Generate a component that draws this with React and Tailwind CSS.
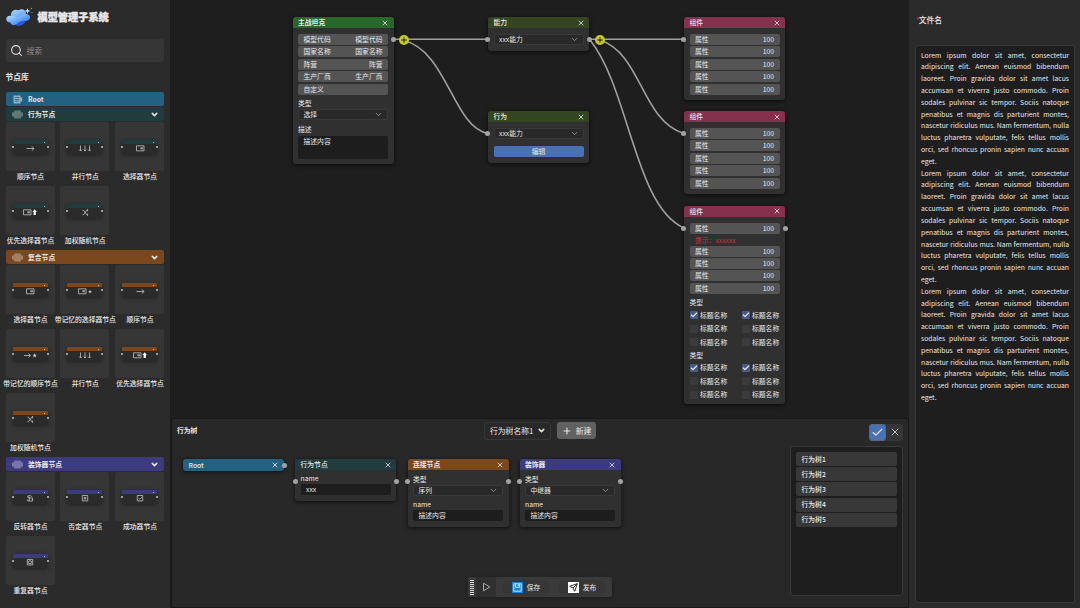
import { Check, ChevronDown, Plus, Search, Send, X } from "lucide-react";

const behaviors = [
  { name: "顺序节点", icon: "arrow" },
  { name: "并行节点", icon: "parallel" },
  { name: "选择器节点", icon: "select" },
  { name: "优先选择器节点", icon: "priority" },
  { name: "加权随机节点", icon: "random" }
];

const composites = [
  { name: "选择器节点", icon: "select" },
  { name: "带记忆的选择器节点", icon: "selectStar" },
  { name: "顺序节点", icon: "arrow" },
  { name: "带记忆的顺序节点", icon: "arrowStar" },
  { name: "并行节点", icon: "parallel" },
  { name: "优先选择器节点", icon: "priority" },
  { name: "加权随机节点", icon: "random" }
];

const decorators = [
  { name: "反转器节点", icon: "invert" },
  { name: "否定器节点", icon: "negate" },
  { name: "成功器节点", icon: "success" },
  { name: "重复器节点", icon: "repeat" }
];

const attributes = Array(5).fill(["属性", "100"]);
const trees = ["行为树1", "行为树2", "行为树3", "行为树4", "行为树5"];
const options = [true, true, false, false, false, false];

const paragraph = [
  "Lorem ipsum dolor sit amet, consectetur",
  "adipiscing elit. Aenean euismod bibendum",
  "laoreet. Proin gravida dolor sit amet lacus",
  "accumsan et viverra justo commodo. Proin",
  "sodales pulvinar sic tempor. Sociis natoque",
  "penatibus et magnis dis parturient montes,",
  "nascetur ridiculus mus. Nam fermentum, nulla",
  "luctus pharetra vulputate, felis tellus mollis",
  "orci, sed rhoncus pronin sapien nunc accuan",
  "eget."
];

const glyphs = {
  arrow: <path d="M5.5 4.5h7.5M10.8 2.3 13 4.5l-2.2 2.2" />,
  parallel: <path d="M4.5 1.5V7M3.2 5.7 4.5 7l1.3-1.3M9 1.5V7M7.7 5.7 9 7l1.3-1.3M13.5 1.5V7M12.2 5.7 13.5 7l1.3-1.3" />,
  select: <path d="M5.5 1.8h7.5v5H5.5zM9.8 3.7h1.8v1.2H9.8z" />,
  selectStar: (
    <>
      <path d="M2.5 1.8H10v5H2.5zM6.8 3.7h1.8v1.2H6.8z" />
      <path d="m14 2.8.5 1.3h1.3l-1 .8.4 1.4-1.2-.8-1.2.8.4-1.4-1-.8h1.3z" fill="#ccc" stroke="none" />
    </>
  ),
  arrowStar: (
    <>
      <path d="M3 4.5h6.5M7.5 2.5l2 2-2 2" />
      <path d="m13.7 2.3.6 1.5h1.5l-1.1 1 .4 1.6-1.4-.9-1.4.9.4-1.6-1.1-1h1.5z" fill="#ccc" stroke="none" />
    </>
  ),
  priority: (
    <>
      <path d="M2.5 1.8H10v5H2.5zM6.8 3.7h1.8v1.2H6.8z" />
      <path d="m13.7 1.2 2.2 2.9h-1.1v3h-2.2v-3h-1.1z" fill="#fff" stroke="none" />
    </>
  ),
  random: <path d="M6.5 2.2h1l3.3 4.5H12M6.5 6.7h1l3.3-4.5H12M11 1.2l1.1 1-1.1 1M11 5.7l1.1 1-1.1 1" />,
  invert: <path d="M10 1.8H6.8v1.7h2M8.3 4h3.2v3H8.3zM6.8 5.3V7h1.5M10 1.8l1 1" />,
  negate: <path d="M6.3 1.5h5.4v5.4H6.3zM8.2 3.4h1.6V5H8.2z" />,
  success: <path d="M6.3 1.5h5.4v5.4H6.3zM7.6 4.2l1.2 1.1 2.1-2.1" />,
  repeat: <path d="M6.3 1.5h5.4v5.4H6.3zM7.8 3 9 2.7l1.2.3.2 1.2-.2 1.2-1.2.3-1.2-.3-.2-1.2z" />
};

function Logo() {
  return (
    <svg width="27" height="20" viewBox="0 0 27 20">
      <defs>
        <linearGradient id="cloud" x1="0" y1="0" x2=".7" y2="1">
          <stop offset="0" stopColor="#a9dcff" />
          <stop offset="1" stopColor="#4b8df5" />
        </linearGradient>
        <linearGradient id="cloudFront" x1="0" y1="0" x2="1" y2="1">
          <stop offset="0" stopColor="#c3e7ff" />
          <stop offset=".5" stopColor="#68a9fa" />
          <stop offset="1" stopColor="#2358e6" />
        </linearGradient>
      </defs>
      <path d="M5 9C4.500 4 8.500 1.500 12.500 3.200 16 1 20.500 3 20 7c3 .2 4.500 2 4 4-.5 2-2.500 2.500-4 2.500H5Z" fill="url(#cloud)" />
      <path d="M.3 12c.2-2.500 2.500-3.700 5-3 2-.7 4.200.2 5.200 2 2-2 4-1 5.500-2.500 2.500-2.500 6.500-1.500 7.300 1.200.5 2.500-1.500 4.300-4 4.300-1 3.500-5.500 5.500-9.500 4-2.500.5-5-.5-5.500-2.500-2.500 0-4-1.500-4-3.500Z" fill="url(#cloudFront)" />
      <path d="M8.500 17.500c3.500 0 4.500-3.500 8-3.500 1.200 0 2-.2 2.800-.1-1 3.500-5 5.600-10.800 3.600Z" fill="#2358e6" />
      <path d="m21.500 1 .8 2.200 2.200.8-2.200.8-.8 2.200-.8-2.200-2.200-.8 2.200-.8Z" fill="#c9e9ff" />
      <circle cx="25.500" cy="1.500" r=".7" fill="#6fa5c9" />
      <circle cx="26" cy="5.500" r=".6" fill="#6fa5c9" />
    </svg>
  );
}

function LibraryHeader({ name, color, root }) {
  return (
    <div className={`mb-px flex h-[14px] items-center rounded-[2px] pr-[5px] pl-[6px] ${color}`}>
      <svg width="11" height="9" viewBox="0 0 11 9" fill="#fff" opacity={root ? 0.5 : 0.3}>
        {root ? (
          <path d="M1.500.5h7v2h1.700v4H8.500v2h-7ZM2.800 2.200h4.400V3H2.800ZM2.800 4h4.400v.8H2.800ZM2.800 5.800h4.400v.8H2.800Z" fillRule="evenodd" />
        ) : (
          <path d="M2.500.5h6l1 2H11v4H9.500l-1 2h-6l-1-2H0v-4h1.500Z" />
        )}
      </svg>
      <span className="ml-[5.5px] flex-1 font-bold">{name}</span>
      {!root && <ChevronDown size={9} strokeWidth={4} />}
    </div>
  );
}

function Library({ items, bar }) {
  return (
    <div className="grid grid-cols-[49px_49px_49px] justify-between">
      {items.map((item) => (
        <div key={item.name} className="flex h-16 flex-col items-center">
          <div className="h-[49px] w-[49px] shrink-0 rounded-[2px] bg-[#363636] px-[7px] pt-[18px]">
            <div className="relative h-[14px] rounded-[2px] bg-[#2b2b2b] shadow-[0_1px_4px_#0006]">
              <div className={`flex h-[4px] items-center justify-end rounded-t-[1px] pr-[3px] ${bar}`}>
                <span className="h-px w-px bg-white/60" />
              </div>
              <span className="absolute top-[6px] -left-px h-[2px] w-[2px] rounded-full bg-[#c4c4c4]" />
              <span className="absolute top-[6px] -right-px h-[2px] w-[2px] rounded-full bg-[#c4c4c4]" />
              <svg className="mx-auto" width="18" height="9" viewBox="0 0 18 9" fill="none" stroke="#c4c4c4" strokeWidth=".8">
                {glyphs[item.icon]}
              </svg>
            </div>
          </div>
          <span className="relative left-[.5px] leading-[11px] font-medium whitespace-nowrap">{item.name}</span>
        </div>
      ))}
    </div>
  );
}

function Port({ className }) {
  return <span className={`absolute h-[5px] w-[5px] rounded-full bg-[#a3a3a3] ${className}`} />;
}

function Node({ title, color, className, bold, children }) {
  return (
    <div className={`absolute w-[101px] rounded-[3px] bg-[#303030] shadow-[0_1px_4px_#000a] ${className}`}>
      <div className={`flex h-[11px] items-center justify-between rounded-t-[3px] pr-[4.5px] pl-[5.5px] ${bold ? "font-bold" : "font-medium"} ${color}`}>
        {title}
        <X size={8} strokeWidth={2.5} className="text-[#ddd]" />
      </div>
      <div className="px-[5.5px] pt-[6px]">{children}</div>
    </div>
  );
}

function Row({ label, value }) {
  return (
    <div className="mb-[1.4px] flex h-[11px] items-center justify-between rounded-[2px] bg-[#545454] px-[5.5px]">
      <span>{label}</span>
      <span>{value}</span>
    </div>
  );
}

function Select({ value, className = "" }) {
  return (
    <div className={`flex h-[11px] items-center justify-between rounded-[2px] border border-[#393939] bg-[#292929] pr-[4px] pl-[4.5px] ${className}`}>
      {value}
      <ChevronDown size={9} strokeWidth={2} className="text-[#aaa]" />
    </div>
  );
}

function Field({ value, className = "h-[11px]" }) {
  return <div className={`rounded-[2px] bg-[#1d1d1d] pl-[5.5px] leading-[11px] ${className}`}>{value}</div>;
}

function Options() {
  return (
    <div className="grid grid-cols-[52px_1fr]">
      {options.map((checked, index) => (
        <div key={index} className="flex h-[13.5px] items-center gap-[2.5px] whitespace-nowrap">
          <span className={`grid h-[8px] w-[8px] shrink-0 place-items-center rounded-[1px] ${checked ? "bg-[#465b86]" : "bg-[#3b3b3b]"}`}>
            {checked && <Check size={8} strokeWidth={3.5} />}
          </span>
          标题名称
        </div>
      ))}
    </div>
  );
}

function PlusDot({ className }) {
  return (
    <span className={`absolute grid h-[10px] w-[10px] place-items-center rounded-full bg-[#c9c922] text-[#222] ${className}`}>
      <Plus size={8} strokeWidth={3} />
    </span>
  );
}

function Sidebar() {
  return (
    <aside className="flex w-[171px] shrink-0 flex-col border-r border-[#1b1b1b] bg-[#2b2b2b] pr-[6px] pl-[5.5px]">
      <div className="flex h-[34px] items-center gap-[5px]">
        <Logo />
        <span className="pb-px text-[10.2px] font-black [-webkit-text-stroke:.4px_#e8e8e8]">模型管理子系统</span>
      </div>
      <div className="mt-[5px] flex h-[23px] items-center gap-[3.5px] rounded-[3px] bg-[#363636] pb-px pl-[4.5px] text-[7.8px] text-[#8c8c8c]">
        <Search size={13} strokeWidth={2} className="text-[#e5e5e5]" />
        搜索
      </div>
      <div className="flex h-[30px] items-center pb-px text-[7.8px] font-bold">节点库</div>
      <LibraryHeader name="Root" color="bg-[#236183]" root />
      <LibraryHeader name="行为节点" color="bg-[#213c3c]" />
      <Library items={behaviors} bar="bg-[#213c3c]" />
      <LibraryHeader name="复合节点" color="bg-[#7b481d]" />
      <Library items={composites} bar="bg-[#7b481d]" />
      <LibraryHeader name="装饰器节点" color="bg-[#3c3b80]" />
      <Library items={decorators} bar="bg-[#3c3b80]" />
    </aside>
  );
}

function ModelCanvas() {
  return (
    <section className="relative h-[418px] overflow-hidden bg-[#1e1e1e]">
      <svg className="absolute inset-0" width="737" height="418" fill="none" stroke="#a0a0a0" strokeWidth="1.6">
        <path d="M223 39.3H317" />
        <path d="M233 40.500C276 51 282 127 317 133.500" />
        <path d="M418 39.3H513" />
        <path d="M429 40C471 54 470 120 513 133.500" />
        <path d="M419 40C458 88 464 207 513 228" />
      </svg>

      <Node title="主战坦克" color="bg-[#2a672a]" className="top-[17px] left-[121.5px] h-[147px]" bold>
        <Row label="模型代码" value="模型代码" />
        <Row label="国家名称" value="国家名称" />
        <Row label="阵营" value="阵营" />
        <Row label="生产厂商" value="生产厂商" />
        <Row label="自定义" />
        <div className="mt-[2px] leading-[12px]">类型</div>
        <Select value="选择" />
        <div className="mt-[3px] mb-px leading-[12px]">描述</div>
        <Field value="描述内容" className="h-[23px]" />
        <Port className="top-[20px] -right-[2.5px]" />
      </Node>

      <Node title="能力" color="bg-[#344621]" className="top-[17px] left-[317px] h-[34px]">
        <Select value="xxx能力" />
        <Port className="top-[20px] -left-[3px]" />
        <Port className="top-[20px] -right-[2.5px]" />
      </Node>

      <Node title="行为" color="bg-[#344621]" className="top-[111px] left-[317px] h-[52px]">
        <Select value="xxx能力" />
        <div className="mt-[7px] h-[11px] rounded-[2px] bg-[#4872b4] text-center leading-[11px]">编辑</div>
        <Port className="top-[20px] -left-[3px]" />
      </Node>

      <Node title="组件" color="bg-[#85304c]" className="top-[17px] left-[513px] h-[83px]">
        {attributes.map(([label, value], index) => <Row key={index} label={label} value={value} />)}
        <Port className="top-[20px] -left-[3px]" />
      </Node>

      <Node title="组件" color="bg-[#85304c]" className="top-[111px] left-[513px] h-[83px]">
        {attributes.map(([label, value], index) => <Row key={index} label={label} value={value} />)}
        <Port className="top-[20px] -left-[3px]" />
      </Node>

      <Node title="组件" color="bg-[#85304c]" className="top-[205.5px] left-[513px] h-[198.5px]">
        <Row label="属性" value="100" />
        <div className="pl-[5.5px] leading-[10.8px] text-[#d42f48]">提示：xxxxxx</div>
        {attributes.slice(1).map(([label, value], index) => <Row key={index} label={label} value={value} />)}
        <div className="mt-[2px] mb-[.5px] leading-[12px]">类型</div>
        <Options />
        <div className="leading-[12px]">类型</div>
        <Options />
        <Port className="top-[20px] -left-[3px]" />
        <Port className="top-[20px] -right-[2.5px]" />
      </Node>

      <PlusDot className="top-[34.5px] left-[228px]" />
      <PlusDot className="top-[34.5px] left-[423.5px]" />
    </section>
  );
}

function Toolbar() {
  return (
    <div className="absolute top-[158px] left-[296px] flex h-[20px] w-[144px] items-center rounded-[2px] bg-[#3a3a3a] shadow-[0_1px_4px_#0005]">
      <svg width="8" height="20" viewBox="0 0 8 20" stroke="#ddd" strokeWidth="4">
        <path d="M4 3v15" strokeDasharray="1 1" />
      </svg>
      <div className="grid h-full w-[20px] place-items-center bg-[#2f2f2f]">
        <svg width="9" height="10" viewBox="0 0 9 10" fill="none" stroke="#aaa">
          <path d="M1.500 1.200 7.800 5 1.500 8.800Z" />
        </svg>
      </div>
      <div className="ml-[6px] flex h-[15px] w-[48px] items-center justify-center gap-[4px] rounded-full bg-[#363636]">
        <span className="grid h-[11px] w-[11px] place-items-center bg-[#1683dd]">
          <svg width="9" height="9" viewBox="0 0 9 9" fill="none" stroke="#d8efff" strokeWidth=".9">
            <path d="M.8.8h7.400v7.400H.8ZM2.500.8v3.500h4V.8M5.300 1.500v1.500" />
          </svg>
        </span>
        保存
      </div>
      <div className="ml-[8px] flex h-[15px] w-[48px] items-center justify-center gap-[4px] rounded-full bg-[#363636]">
        <span className="grid h-[11px] w-[11px] place-items-center bg-white text-[#222]"><Send size={9} strokeWidth={2.5} /></span>
        发布
      </div>
    </div>
  );
}

function TreePanel() {
  return (
    <section className="relative flex-1 rounded-[3px] border border-[#181818] bg-[#282828]">
      <div className="flex h-[23px] items-center pl-[5px]">
        <span className="w-[307px] pb-px font-bold">行为树</span>
        <div className="flex h-[18px] w-[67px] items-center justify-between rounded-[3px] border border-[#363636] pr-[4px] pl-[5px] text-[7.8px]">
          行为树名称1
          <ChevronDown size={9} strokeWidth={4} />
        </div>
        <div className="ml-[6px] flex h-[17px] w-[39px] items-center justify-center gap-[4px] rounded-[3px] bg-[#616161] text-[7.8px]">
          <Plus size={10} strokeWidth={2.5} />
          新建
        </div>
        <div className="mt-[3px] mr-[5px] ml-auto flex h-[17px] w-[34px] rounded-[3px] bg-[#363636]">
          <span className="grid w-[17px] place-items-center rounded-[3px] border border-[#596779] bg-[#4872b4]"><Check size={13} strokeWidth={2} /></span>
          <span className="grid w-[17px] place-items-center text-[#bbb]"><X size={12} strokeWidth={2} /></span>
        </div>
      </div>
      <div className="mt-[4px] mr-[5px] ml-auto h-[150px] w-[113px] rounded-[3px] border border-[#383838] bg-[#1e1e1e] p-[5px]">
        {trees.map((tree) => (
          <div key={tree} className="mb-[1.2px] flex h-[14px] items-center rounded-[2px] bg-[#383838] pl-[5.5px] font-medium">{tree}</div>
        ))}
      </div>

      <div className="absolute top-[40px] left-[11px] flex h-[12px] w-[101px] items-center justify-between rounded-[3px] bg-[#236183] pr-[5px] pl-[5.5px] font-medium shadow-[0_1px_4px_#000a]">
        Root
        <X size={8} strokeWidth={2.5} />
        <Port className="-right-[2.5px]" />
      </div>
      <Node title="行为节点" color="bg-[#213c3c]" className="top-[40px] left-[123px] h-[42px]">
        <div className="-mt-[4px] leading-[12px]">name</div>
        <Field value="xxx" />
        <Port className="top-[20px] -left-[2.5px]" />
        <Port className="top-[20px] -right-[2.5px]" />
      </Node>
      <Node title="连接节点" color="bg-[#7b481d]" className="top-[40px] left-[235.5px] h-[67.5px]" bold>
        <div className="-mt-[3px] leading-[12px]">类型</div>
        <Select value="序列" />
        <div className="mt-[2px] leading-[12px]">name</div>
        <Field value="描述内容" />
        <Port className="top-[20px] -left-[2.5px]" />
        <Port className="top-[20px] -right-[2.5px]" />
      </Node>
      <Node title="装饰器" color="bg-[#3c3b80]" className="top-[40px] left-[347.5px] h-[67.5px]" bold>
        <div className="-mt-[3px] leading-[12px]">类型</div>
        <Select value="中继器" />
        <div className="mt-[2px] leading-[12px]">name</div>
        <Field value="描述内容" />
        <Port className="top-[20px] -left-[2.5px]" />
        <Port className="top-[20px] -right-[2.5px]" />
      </Node>
      <Toolbar />
    </section>
  );
}

function FilePanel() {
  return (
    <aside className="flex w-[171px] shrink-0 flex-col bg-[#2b2b2b] pr-[5px] pl-[6px]">
      <div className="flex h-[45px] items-center pb-[7px] pl-px text-[7.8px] font-medium"><span className="-mr-px text-[#d12d3c]">*</span>文件名</div>
      <div className="h-[558px] rounded-[3px] border border-[#383838] bg-[#1e1e1e] pt-[3.5px] pr-[5px] pl-[5px]">
        {[0, 1, 2].map((block) => (
          <div key={block} className="leading-[11.815px]">
            {paragraph.map((line) => (
              <p key={line} className={line === "eget." ? "" : "[text-align-last:justify]"}>{line}</p>
            ))}
          </div>
        ))}
      </div>
    </aside>
  );
}

export default function App() {
  return (
    <div className="flex h-[608px] w-[1080px] overflow-hidden bg-[#1e1e1e] font-['Noto_Sans_CJK_SC',sans-serif] text-[6.8px] leading-[11px] text-[#e8e8e8]">
      <Sidebar />
      <main className="flex w-[738px] shrink-0 flex-col">
        <ModelCanvas />
        <TreePanel />
      </main>
      <FilePanel />
    </div>
  );
}
